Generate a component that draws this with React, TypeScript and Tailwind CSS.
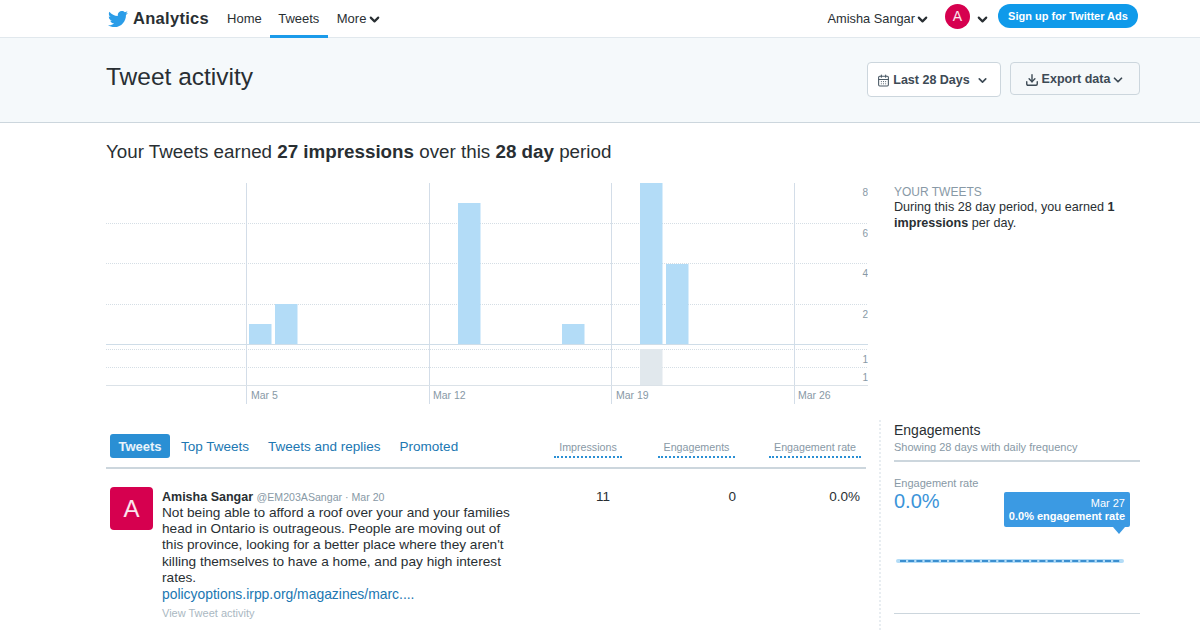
import { CalendarDays, ChevronDown, Download } from "lucide-react";
import { FaTwitter } from "react-icons/fa";

const FONT = { fontFamily: '"Liberation Sans", Arial, sans-serif' };

/* Chart data, in chart coordinates (origin = 106,183) */
const GRID_DOTTED = [40, 80, 121, 166, 184];
const WEEK_LINES = [140, 323, 505, 688];
const BARS = [
  { x: 143, y: 141, h: 20.5 },
  { x: 169, y: 121, h: 40.5 },
  { x: 352, y: 20, h: 141.5 },
  { x: 456, y: 141, h: 20.5 },
  { x: 534, y: 0, h: 161.5 },
  { x: 560, y: 81, h: 80.5 },
];
const Y_LABELS = [
  { y: 13, t: "8" },
  { y: 54, t: "6" },
  { y: 94, t: "4" },
  { y: 135, t: "2" },
  { y: 180, t: "1" },
  { y: 198, t: "1" },
];
const X_LABELS = [
  { x: 145, t: "Mar 5" },
  { x: 327, t: "Mar 12" },
  { x: 510, t: "Mar 19" },
  { x: 692, t: "Mar 26" },
];

function Chart() {
  return (
    <svg width="762" height="221" viewBox="0 0 762 221" className="block shrink-0">
      {GRID_DOTTED.map((y) => (
        <line key={y} x1="0" x2="762" y1={y + 0.5} y2={y + 0.5} stroke="#d5dee5" strokeDasharray="1 1" />
      ))}
      {BARS.map((b) => (
        <rect key={b.x} x={b.x} y={b.y} width="22.5" height={b.h} fill="#b3dcf7" />
      ))}
      <rect x="534" y="166" width="22.5" height="36" fill="#e1e8ed" />
      {WEEK_LINES.map((x) => (
        <line key={x} x1={x + 0.5} x2={x + 0.5} y1="0" y2="221" stroke="#d3dde8" />
      ))}
      <line x1="0" x2="762" y1="161.5" y2="161.5" stroke="#cfdde8" />
      <line x1="0" x2="762" y1="202.5" y2="202.5" stroke="#dbe2e8" />
      {Y_LABELS.map((l, i) => (
        <text key={i} x="762" y={l.y} textAnchor="end" fontSize="10" fill="#8899a6" style={FONT}>
          {l.t}
        </text>
      ))}
      {X_LABELS.map((l) => (
        <text key={l.t} x={l.x} y="216" fontSize="10.5" fill="#8899a6" style={FONT}>
          {l.t}
        </text>
      ))}
    </svg>
  );
}

function Header() {
  return (
    <header className="flex h-[38px] items-center border-b border-[#e1e8ed] bg-white pl-[108px] pr-[62px]">
      <FaTwitter className="h-[20px] w-[20px] text-[#2b9de8]" />
      <span className="ml-[5px] text-[16.5px] font-bold tracking-[0.3px] text-[#292f33]">Analytics</span>
      <nav className="ml-[8px] flex h-full items-center text-[13px] text-[#292f33]">
        <span className="ml-[10px]">Home</span>
        <span className="ml-[8px] flex h-[38px] w-[58px] items-center justify-center border-b-[3px] border-[#1b9bea] pt-[3px]">
          Tweets
        </span>
        <span className="ml-[9px] flex items-center">
          More
          <ChevronDown size={15} strokeWidth={3.4} className="ml-[1px] mt-[1px]" />
        </span>
      </nav>
      <div className="ml-auto flex items-center text-[12.8px] text-[#292f33]">
        <span>Amisha Sangar</span>
        <ChevronDown size={15} strokeWidth={3.4} className="mt-[1px]" />
        <span className="ml-[15px] mb-[5px] flex h-[25px] w-[25px] items-center justify-center rounded-full bg-[#d6004f] text-[14px] text-white/90">
          A
        </span>
        <ChevronDown size={15} strokeWidth={3.4} className="ml-[5px] mt-[1px]" />
        <span className="ml-[8px] mb-[5px] flex h-[24px] w-[140px] items-center justify-center rounded-full bg-[#0f9aea] text-[11px] font-bold text-white">
          Sign up for Twitter Ads
        </span>
      </div>
    </header>
  );
}

function TitleBand() {
  return (
    <section className="flex h-[85px] items-start border-b border-[#ccd6dd] bg-[#f5f9fb] pl-[106px] pr-[60px]">
      <h1 className="mt-[25px] text-[24.5px] leading-[28px] text-[#292f33]">Tweet activity</h1>
      <div className="ml-auto mt-[24px] flex items-start gap-[9px] text-[12.5px] font-bold text-[#3d4a55]">
        <button className="flex h-[35px] w-[134px] items-center justify-center rounded-[4px] border border-[#ccd6dd] bg-white pr-[2px] pt-[2px]">
          <CalendarDays size={13} className="mr-[3px] text-[#4a5965]" />
          Last 28 Days
          <ChevronDown size={13} strokeWidth={3} className="ml-[6px]" />
        </button>
        <button className="flex h-[33px] w-[130px] items-center justify-center rounded-[4px] border border-[#ccd6dd] bg-[#f5f8fa] pt-[2px]">
          <Download size={14} strokeWidth={2.4} className="mr-[3px]" />
          Export data
          <ChevronDown size={14} strokeWidth={3} className="ml-[1px]" />
        </button>
      </div>
    </section>
  );
}

function TabsRow() {
  return (
    <div className="flex h-[35px] items-start border-b-2 border-[#ccd6dd] pl-[4px]">
      <span className="flex h-[24px] w-[60px] items-center justify-center rounded-[3px] bg-[#2a8fd4] pt-[1px] text-[13px] font-bold text-white/90">
        Tweets
      </span>
      <div className="ml-[11px] flex h-[26px] items-center gap-[19px] text-[13.5px] text-[#2077b2]">
        <span>Top Tweets</span>
        <span>Tweets and replies</span>
        <span>Promoted</span>
      </div>
      <div className="ml-auto mt-[6px] flex items-start pr-[5px] text-[10.7px] leading-[14px] text-[#8899a6]">
        <span className="w-[68px] border-b-2 border-dotted border-[#2a8fd4] pb-[2px] text-center">Impressions</span>
        <span className="ml-[36px] w-[77px] border-b-2 border-dotted border-[#2a8fd4] pb-[2px] text-center">Engagements</span>
        <span className="ml-[34px] w-[92px] border-b-2 border-dotted border-[#2a8fd4] pb-[2px] text-center">Engagement rate</span>
      </div>
    </div>
  );
}

function TweetRow() {
  return (
    <div className="flex items-start pl-[4px] pt-[18px]">
      <div className="flex h-[43px] w-[43px] shrink-0 items-center justify-center rounded-[4px] bg-[#d6004f] text-[24px] text-white/90">
        A
      </div>
      <div className="ml-[9px] mt-[2px] w-[356px]">
        <div className="text-[12.5px] leading-[16px] text-[#8899a6]">
          <span className="font-bold text-[#292f33]">Amisha Sangar</span>{" "}
          <span className="text-[10.6px]">@EM203ASangar · Mar 20</span>
        </div>
        <p className="text-[13.65px] leading-[16.2px] text-[#292f33]">
          Not being able to afford a roof over your and your families head in Ontario is outrageous. People are moving out of this province, looking for a better place where they aren't killing themselves to have a home, and pay high interest rates.
        </p>
        <p className="text-[13.9px] leading-[16.2px] text-[#2077b2]">policyoptions.irpp.org/magazines/marc....</p>
        <p className="mt-[4px] text-[11px] leading-[14px] text-[#aab8c2]">View Tweet activity</p>
      </div>
      <div className="ml-auto mt-[2px] flex pr-[6px] text-[13.5px] leading-[16px] text-[#292f33]">
        <span className="w-[15px] text-right">11</span>
        <span className="ml-[118px] w-[8px] text-right">0</span>
        <span className="ml-[92px] w-[32px] text-right">0.0%</span>
      </div>
    </div>
  );
}

function EngagementsPanel() {
  return (
    <aside className="ml-[13px] h-[210px] flex-1 border-l-2 border-dotted border-[#e8edf1] pl-[13px] pr-[60px] pt-[1px]">
      <h3 className="text-[14px] leading-[18px] text-[#292f33]">Engagements</h3>
      <p className="mt-[1px] text-[11px] leading-[14px] text-[#8899a6]">Showing 28 days with daily frequency</p>
      <div className="mt-[6px] h-[2px] bg-[#ccd6dd]" />
      <div className="relative h-[152px] border-b border-[#ccd6dd] pt-[14px]">
        <p className="text-[11px] leading-[14px] text-[#8899a6]">Engagement rate</p>
        <p className="text-[20px] leading-[23px] text-[#3b94d9]">0.0%</p>
        <div className="absolute left-[110px] top-[30px] h-[35px] w-[126px] rounded-[2px] bg-[#3b9ae3] pr-[5px] pt-[5px] text-right text-[11px] leading-[12.5px] text-white">
          <div>Mar 27</div>
          <div className="font-bold">0.0% engagement rate</div>
          <div className="absolute right-[5px] top-[35px] h-0 w-0 border-x-[6px] border-t-[7px] border-x-transparent border-t-[#3b9ae3]" />
        </div>
        <svg width="230" height="8" viewBox="0 0 230 8" className="absolute left-[1px] top-[95px]">
          <line x1="3" x2="227" y1="4" y2="4" stroke="#b3dcf7" strokeWidth="4" strokeLinecap="round" />
          <line x1="5" x2="225" y1="4" y2="4" stroke="#3b8fd0" strokeWidth="2" strokeDasharray="6 2.2" />
        </svg>
      </div>
    </aside>
  );
}

export default function App() {
  return (
    <div className="h-[630px] w-[1200px] overflow-hidden bg-white" style={FONT}>
      <Header />
      <TitleBand />
      <div className="flex flex-col">
        <h2 className="ml-[106px] mt-[17px] text-[18.8px] leading-[24px] text-[#292f33]">
          Your Tweets earned <b>27 impressions</b> over this <b>28 day</b> period
        </h2>
        <div className="ml-[106px] mt-[19px] flex items-start">
          <Chart />
          <div className="ml-[26px] w-[246px] pt-[2px] text-[12.6px] leading-[16px] text-[#292f33]">
            <p className="text-[12px] leading-[14px] text-[#8899a6]">YOUR TWEETS</p>
            <p>
              During this 28 day period, you earned <b>1 impressions</b> per day.
            </p>
          </div>
        </div>
        <div className="ml-[106px] mt-[16px] flex items-start">
          <div className="w-[760px] shrink-0 pt-[14px]">
            <TabsRow />
            <TweetRow />
          </div>
          <EngagementsPanel />
        </div>
      </div>
    </div>
  );
}
